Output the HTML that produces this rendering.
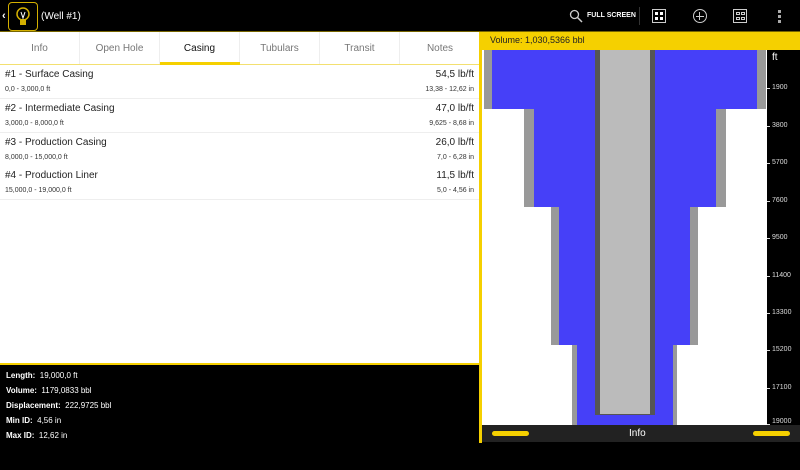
<!DOCTYPE html>
<html><head><meta charset="utf-8"><style>
*{margin:0;padding:0;box-sizing:border-box}
body{width:800px;height:470px;background:#000;position:relative;overflow:hidden;font-family:"Comic Sans MS","Liberation Sans",sans-serif;}
.a{position:absolute}
.tab{position:absolute;top:32px;height:33px;width:80px;text-align:center;line-height:33px;font-size:10px;color:#777;border-right:1px solid #eee}
.row{position:absolute;left:0;width:479px;height:34px;border-bottom:1px solid #eee;background:#fff}
.t1{position:absolute;left:5px;top:4px;font-size:10px;color:#222}
.t2{position:absolute;left:5px;top:21px;font-size:7px;color:#333}
.r1{position:absolute;right:5px;top:4px;font-size:10px;color:#222}
.r2{position:absolute;right:5px;top:21px;font-size:7px;color:#333}
.info{position:absolute;left:6px;font-size:8px;color:#fff}
.info b{font-weight:bold}
.sc{position:absolute;left:772px;font-size:7px;color:#ddd}
.tk{position:absolute;left:767px;width:3px;height:1px;background:#ddd}
</style></head><body>
<div class="a" style="left:2px;top:10px;color:#fff;font-size:11px;font-weight:bold">‹</div>
<div class="a" style="left:8px;top:2px;width:30px;height:29px;border:1.5px solid #d4b000;border-radius:4px;"></div>
<svg class="a" style="left:14px;top:6px" width="18" height="22" viewBox="0 0 18 22"><circle cx="9" cy="8" r="6" fill="none" stroke="#d4b000" stroke-width="1.5"/><rect x="6" y="13" width="6" height="6" fill="#d4b000"/><path d="M7 6 L9 12 L11 6" stroke="#fff" fill="none"/></svg>
<div class="a" style="left:41px;top:11px;color:#fff;font-size:10px">(Well #1)</div>
<svg class="a" style="left:569px;top:9px" width="14" height="14"><circle cx="5.5" cy="5.5" r="4" stroke="#ccc" stroke-width="1.3" fill="none"/><line x1="8.5" y1="8.5" x2="13" y2="13" stroke="#ccc" stroke-width="1.5"/></svg>
<div class="a" style="left:587px;top:12px;color:#fff;font-size:7px;font-weight:bold">FULL SCREEN</div>
<div class="a" style="left:639px;top:7px;width:1px;height:18px;background:#333"></div>
<div class="a" style="left:652px;top:9px;width:14px;height:14px;border:1px solid #ccc;background:#000"></div>
<div class="a" style="left:655px;top:12px;width:8px;height:8px;background:linear-gradient(#fff 0 3px,transparent 3px 5px,#fff 5px);"></div>
<div class="a" style="left:658px;top:12px;width:2px;height:8px;background:#000"></div>
<div class="a" style="left:693px;top:9px;width:14px;height:14px;border:1px solid #ccc;border-radius:50%"></div>
<div class="a" style="left:699px;top:12px;width:1px;height:8px;background:#ccc"></div>
<div class="a" style="left:696px;top:15.5px;width:8px;height:1px;background:#ccc"></div>
<div class="a" style="left:733px;top:9px;width:14px;height:14px;border:1px solid #ccc"></div>
<div class="a" style="left:736px;top:12px;width:4px;height:3px;border:1px solid #ccc"></div><div class="a" style="left:741px;top:12px;width:4px;height:3px;border:1px solid #ccc"></div>
<div class="a" style="left:736px;top:17px;width:4px;height:3px;border:1px solid #ccc"></div><div class="a" style="left:741px;top:17px;width:4px;height:3px;border:1px solid #ccc"></div>
<div class="a" style="left:778px;top:10px;width:3px;height:3px;background:#aaa;box-shadow:0 5px #aaa,0 10px #aaa"></div>
<div class="a" style="left:0;top:31px;width:800px;height:1px;background:#776600"></div>
<div class="a" style="left:0;top:32px;width:480px;height:332px;background:#fff"></div>
<div class="tab">Info</div>
<div class="tab" style="left:80px">Open Hole</div>
<div class="tab" style="left:160px;color:#111">Casing</div>
<div class="tab" style="left:240px">Tubulars</div>
<div class="tab" style="left:320px">Transit</div>
<div class="tab" style="left:400px;border:none">Notes</div>
<div class="a" style="left:0;top:64px;width:480px;height:1px;background:#f3e070"></div>
<div class="a" style="left:160px;top:62px;width:80px;height:3px;background:#f5d000"></div>
<div class="row" style="top:65px"><div class="t1">#1 - Surface Casing</div><div class="t2">0,0 - 3,000,0 ft</div><div class="r1">54,5 lb/ft</div><div class="r2">13,38 - 12,62 in</div></div>
<div class="row" style="top:99px"><div class="t1">#2 - Intermediate Casing</div><div class="t2">3,000,0 - 8,000,0 ft</div><div class="r1">47,0 lb/ft</div><div class="r2">9,625 - 8,68 in</div></div>
<div class="row" style="top:133px"><div class="t1">#3 - Production Casing</div><div class="t2">8,000,0 - 15,000,0 ft</div><div class="r1">26,0 lb/ft</div><div class="r2">7,0 - 6,28 in</div></div>
<div class="row" style="top:166px"><div class="t1">#4 - Production Liner</div><div class="t2">15,000,0 - 19,000,0 ft</div><div class="r1">11,5 lb/ft</div><div class="r2">5,0 - 4,56 in</div></div>
<div class="a" style="left:0;top:363px;width:481px;height:2px;background:#f5d000"></div>
<div class="info" style="top:371px"><b>Length:</b>&nbsp; 19,000,0 ft</div>
<div class="info" style="top:386px"><b>Volume:</b>&nbsp; 1179,0833 bbl</div>
<div class="info" style="top:401px"><b>Displacement:</b>&nbsp; 222,9725 bbl</div>
<div class="info" style="top:416px"><b>Min ID:</b>&nbsp; 4,56 in</div>
<div class="info" style="top:431px"><b>Max ID:</b>&nbsp; 12,62 in</div>
<div class="a" style="left:479px;top:32px;width:3px;height:411px;background:#f5d000"></div>
<div class="a" style="left:482px;top:32px;width:318px;height:18px;background:#f5d000;font-size:9px;color:#222;padding:3px 0 0 8px">Volume: 1,030,5366 bbl</div>
<div class="a" style="left:482px;top:50px;width:285px;height:375px;background:#fff"></div>
<div class="a" style="left:484px;top:50px;width:282px;height:59px;background:#999"></div>
<div class="a" style="left:492px;top:50px;width:265px;height:59px;background:#4640f8"></div>
<div class="a" style="left:524px;top:109px;width:202px;height:98px;background:#999"></div>
<div class="a" style="left:534px;top:109px;width:182px;height:98px;background:#4640f8"></div>
<div class="a" style="left:551px;top:207px;width:147px;height:138px;background:#999"></div>
<div class="a" style="left:559px;top:207px;width:131px;height:138px;background:#4640f8"></div>
<div class="a" style="left:572px;top:345px;width:105px;height:80px;background:#999"></div>
<div class="a" style="left:577px;top:345px;width:96px;height:80px;background:#4640f8"></div>
<div class="a" style="left:595px;top:50px;width:60px;height:365px;background:#555"></div>
<div class="a" style="left:600px;top:50px;width:50px;height:364px;background:#bbb"></div>
<div class="a" style="left:767px;top:50px;width:33px;height:375px;background:#000"></div>
<div class="a" style="left:772px;top:52px;font-size:10px;color:#fff">ft</div>
<div class="tk" style="top:88px"></div><div class="sc" style="top:84px">1900</div>
<div class="tk" style="top:126px"></div><div class="sc" style="top:122px">3800</div>
<div class="tk" style="top:163px"></div><div class="sc" style="top:159px">5700</div>
<div class="tk" style="top:201px"></div><div class="sc" style="top:197px">7600</div>
<div class="tk" style="top:238px"></div><div class="sc" style="top:234px">9500</div>
<div class="tk" style="top:276px"></div><div class="sc" style="top:272px">11400</div>
<div class="tk" style="top:313px"></div><div class="sc" style="top:309px">13300</div>
<div class="tk" style="top:350px"></div><div class="sc" style="top:346px">15200</div>
<div class="tk" style="top:388px"></div><div class="sc" style="top:384px">17100</div>
<div class="tk" style="top:424px"></div><div class="sc" style="top:418px">19000</div>
<div class="a" style="left:482px;top:425px;width:318px;height:17px;background:#222"></div>
<div class="a" style="left:492px;top:431px;width:37px;height:5px;border-radius:3px;background:#f5d000"></div>
<div class="a" style="left:753px;top:431px;width:37px;height:5px;border-radius:3px;background:#f5d000"></div>
<div class="a" style="left:629px;top:428px;font-size:10px;color:#fff">Info</div>
</body></html>
